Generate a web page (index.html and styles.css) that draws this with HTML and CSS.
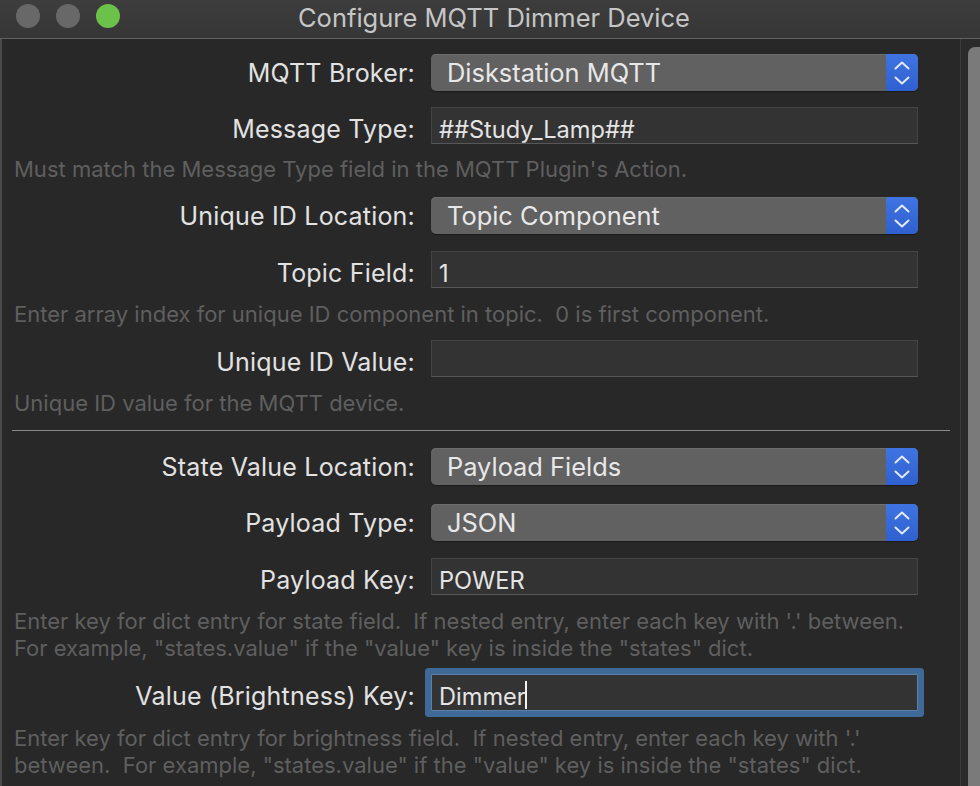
FILE: index.html
```html
<!DOCTYPE html>
<html>
<head>
<meta charset="utf-8">
<link rel="stylesheet" href="styles.css">
</head>
<body>
<div class="window">
  <div class="titlebar">
    <div class="lights">
      <span class="light grey"></span>
      <span class="light grey"></span>
      <span class="light green"></span>
    </div>
    <div class="title">Configure MQTT Dimmer Device</div>
  </div>
  <div class="main">
    <div class="content">
      <div class="row r-broker">
        <label class="label">MQTT Broker:</label>
        <div class="popup"><span class="ptext">Diskstation MQTT</span><span class="stepper"><svg width="16" height="26" viewBox="0 0 16 26"><path d="M1.5 8.5 L8 2.5 L14.5 8.5 M1.5 17.5 L8 23.5 L14.5 17.5" fill="none" stroke="#e4e9f7" stroke-width="2" stroke-linecap="round" stroke-linejoin="round"/></svg></span></div>
      </div>
      <div class="row frow r-msg">
        <label class="label">Message Type:</label>
        <div class="field">##Study_Lamp##</div>
      </div>
      <p class="help h1">Must match the Message Type field in the MQTT Plugin's Action.</p>
      <div class="row r-uidloc">
        <label class="label">Unique ID Location:</label>
        <div class="popup"><span class="ptext">Topic Component</span><span class="stepper"><svg width="16" height="26" viewBox="0 0 16 26"><path d="M1.5 8.5 L8 2.5 L14.5 8.5 M1.5 17.5 L8 23.5 L14.5 17.5" fill="none" stroke="#e4e9f7" stroke-width="2" stroke-linecap="round" stroke-linejoin="round"/></svg></span></div>
      </div>
      <div class="row frow r-topic">
        <label class="label">Topic Field:</label>
        <div class="field">1</div>
      </div>
      <p class="help h2">Enter array index for unique ID component in topic.&nbsp; 0 is first component.</p>
      <div class="row frow r-uidval">
        <label class="label">Unique ID Value:</label>
        <div class="field"></div>
      </div>
      <p class="help h3">Unique ID value for the MQTT device.</p>
      <div class="separator"></div>
      <div class="row r-stateloc">
        <label class="label">State Value Location:</label>
        <div class="popup"><span class="ptext">Payload Fields</span><span class="stepper"><svg width="16" height="26" viewBox="0 0 16 26"><path d="M1.5 8.5 L8 2.5 L14.5 8.5 M1.5 17.5 L8 23.5 L14.5 17.5" fill="none" stroke="#e4e9f7" stroke-width="2" stroke-linecap="round" stroke-linejoin="round"/></svg></span></div>
      </div>
      <div class="row r-ptype">
        <label class="label">Payload Type:</label>
        <div class="popup"><span class="ptext">JSON</span><span class="stepper"><svg width="16" height="26" viewBox="0 0 16 26"><path d="M1.5 8.5 L8 2.5 L14.5 8.5 M1.5 17.5 L8 23.5 L14.5 17.5" fill="none" stroke="#e4e9f7" stroke-width="2" stroke-linecap="round" stroke-linejoin="round"/></svg></span></div>
      </div>
      <div class="row frow r-pkey">
        <label class="label">Payload Key:</label>
        <div class="field">POWER</div>
      </div>
      <p class="help h4">Enter key for dict entry for state field.&nbsp; If nested entry, enter each key with '.' between.<br>For example, "states.value" if the "value" key is inside the "states" dict.</p>
      <div class="row frow r-vkey">
        <label class="label">Value (Brightness) Key:</label>
        <div class="field focused">Dimmer<span class="caret"></span></div>
      </div>
      <p class="help h5">Enter key for dict entry for brightness field.&nbsp; If nested entry, enter each key with '.'<br>between.&nbsp; For example, "states.value" if the "value" key is inside the "states" dict.</p>
    </div>
    <div class="vdivider"></div>
    <div class="scrolltrack"><div class="thumb"></div></div>
  </div>
</div>
</body>
</html>
```

FILE: styles.css
```css
html, body {
  margin: 0;
  padding: 0;
  background: #282828;
}
body {
  font-family: Inter, "Noto Sans", "Liberation Sans", sans-serif;
  color: #e4e4e4;
}
.window {
  width: 980px;
  height: 786px;
  overflow: hidden;
  display: flex;
  flex-direction: column;
  background: #282828;
}
.titlebar {
  height: 38px;
  flex: none;
  position: relative;
  background: linear-gradient(#3d3d3d, #363636);
  border-bottom: 1.5px solid #626262;
  display: flex;
  align-items: center;
  justify-content: center;
}
.lights {
  position: absolute;
  left: 16px;
  top: 4px;
  display: flex;
  gap: 16px;
}
.light {
  width: 24px;
  height: 24px;
  border-radius: 50%;
  display: block;
}
.light.grey { background: #686868; }
.light.green { background: #6cc14b; }
.title {
  font-size: 25.5px;
  color: #c6c6c6;
  margin-top: -4px;
  margin-left: 8px;
}
.main {
  flex: 1;
  display: flex;
  min-height: 0;
}
.content {
  flex: 1;
  border-left: 2px solid #4a4a4a;
  display: flex;
  flex-direction: column;
  min-width: 0;
}
.vdivider {
  width: 1px;
  background: #3b3b3b;
  flex: none;
}
.scrolltrack {
  width: 19px;
  flex: none;
  background: #2b2b2b;
  display: flex;
  justify-content: flex-end;
  padding-top: 8px;
}
.thumb {
  width: 12px;
  background: #7a7a7a;
  border-radius: 7px 0 0 0;
}
.row {
  display: flex;
  align-items: center;
  height: 37px;
  flex: none;
}
.label {
  text-align: right;
  font-size: 25px;
  letter-spacing: 0.2px;
  color: #e2e2e2;
  padding-right: 16px;
  box-sizing: border-box;
  flex: none;
  width: 429px;
  white-space: nowrap;
}
.frow .label {
  padding-top: 7px;
}
.popup {
  width: 487px;
  height: 37px;
  box-sizing: border-box;
  border-radius: 5px;
  background: #616161;
  box-shadow: inset 0 1px 0 #6d6d6d, 0 1px 1px rgba(0,0,0,0.35);
  display: flex;
  align-items: center;
  overflow: hidden;
}
.ptext {
  flex: 1;
  padding-left: 16px;
  font-size: 25.4px;
  color: #e8e8e8;
}
.stepper {
  width: 32px;
  height: 100%;
  background: linear-gradient(#3f74e2, #2f60cf);
  display: flex;
  align-items: center;
  justify-content: center;
}
.field {
  width: 487px;
  height: 37px;
  box-sizing: border-box;
  background: #333333;
  border: 1px solid #444444;
  border-bottom-color: #575757;
  font-size: 23.6px;
  color: #e4e4e4;
  padding-left: 7px;
  padding-top: 7px;
  display: flex;
  align-items: center;
}
.field.focused {
  box-shadow: 0 0 0 6px #3f6a97;
  border-radius: 1px;
  border-color: #5b7fa6;
}
.caret {
  width: 2px;
  height: 28px;
  background: #f2f2f2;
  display: inline-block;
  margin-left: -1px;
  margin-top: -3px;
}
.help {
  margin: 0;
  padding-left: 12px;
  font-size: 22px;
  line-height: 27px;
  color: #5f5f5f;
  flex: none;
  white-space: nowrap;
}
.separator {
  height: 1px;
  background: #8a8a8a;
  margin-left: 10px;
  margin-right: 10px;
  flex: none;
}
.r-broker { margin-top: 15px; }
.r-msg { margin-top: 16px; }
.h1 { margin-top: 12px; }
.r-uidloc { margin-top: 14px; }
.r-topic { margin-top: 17px; }
.h2 { margin-top: 13px; }
.r-uidval { margin-top: 12px; }
.h3 { margin-top: 13px; }
.separator { margin-top: 13px; }
.r-stateloc { margin-top: 17px; }
.r-ptype { margin-top: 19px; }
.r-pkey { margin-top: 17px; }
.h4 { margin-top: 13px; }
.r-vkey { margin-top: 12px; }
.h5 { margin-top: 14px; }
```
